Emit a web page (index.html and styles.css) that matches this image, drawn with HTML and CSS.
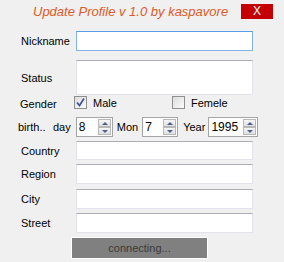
FILE: index.html
```html
<!DOCTYPE html>
<html lang="en">
<head>
    <meta charset="UTF-8">
    <meta name="viewport" content="width=device-width, initial-scale=1.0">
    <title>Update Profile</title>
    <link rel="stylesheet" href="styles.css">
</head>
<body>
    <div class="header">
        <span class="title">Update Profile v 1.0 by kaspavore</span>
        <button type="button" class="close">X</button>
    </div>

    <div class="form">
        <div class="row row-nick">
            <label class="lbl">Nickname</label>
            <div class="field focused"></div>
        </div>

        <div class="row row-status">
            <label class="lbl">Status</label>
            <div class="field tall"></div>
        </div>

        <div class="row row-gender">
            <label class="lbl">Gender</label>
            <span class="check checked">
                <svg width="11" height="11" viewBox="0 0 11 11"><path d="M2 5.5 L4.5 8.5 L9 1.5" fill="none" stroke="#3f5597" stroke-width="1.7"/></svg>
            </span>
            <span class="check-text">Male</span>
            <span class="check female"></span>
            <span class="check-text">Femele</span>
        </div>

        <div class="row row-birth">
            <span class="birth">birth..</span>
            <span class="unit">day</span>
            <div class="spin spin-day"><span class="val">8</span><span class="arrows"><i class="up"></i><i class="down"></i></span></div>
            <span class="unit">Mon</span>
            <div class="spin spin-mon"><span class="val">7</span><span class="arrows"><i class="up"></i><i class="down"></i></span></div>
            <span class="unit">Year</span>
            <div class="spin spin-year"><span class="val">1995</span><span class="arrows"><i class="up"></i><i class="down"></i></span></div>
        </div>

        <div class="row row-country">
            <label class="lbl">Country</label>
            <div class="field short"></div>
        </div>

        <div class="row row-region">
            <label class="lbl">Region</label>
            <div class="field"></div>
        </div>

        <div class="row row-city">
            <label class="lbl">City</label>
            <div class="field"></div>
        </div>

        <div class="row row-street">
            <label class="lbl">Street</label>
            <div class="field"></div>
        </div>

        <div class="actions">
            <button type="button" class="connect">connecting...</button>
        </div>
    </div>
</body>
</html>
```

FILE: styles.css
```css
body {
    margin: 0;
    background: #f0f0f0;
    font-family: "Liberation Sans", Arial, sans-serif;
    font-size: 11px;
    color: #000;
    width: 284px;
    height: 262px;
    overflow: hidden;
}

.header {
    display: flex;
    align-items: flex-start;
    height: 26px;
}

.title {
    margin: 4px 0 0 33px;
    width: 208px;
    font-size: 13px;
    font-style: italic;
    color: #dc5a28;
    line-height: 16px;
}

.close {
    margin-top: 4px;
    width: 32px;
    height: 15px;
    padding: 0;
    border: none;
    background: #c40000;
    color: #fff;
    font-family: "Liberation Sans", Arial, sans-serif;
    font-size: 12px;
    line-height: 15px;
}

.form {
    padding-left: 20px;
}

.row {
    display: flex;
    align-items: center;
}

.lbl {
    width: 56px;
    padding-left: 1px;
    box-sizing: border-box;
}

.field {
    width: 177px;
    height: 20px;
    box-sizing: border-box;
    background: #fff;
    border: 1px solid #e2e3ea;
    border-top-color: #abadb3;
}

.field.focused {
    border-color: #7eb4ea;
    border-top-color: #569de5;
}

.field.tall {
    height: 35px;
}

.field.short {
    height: 19px;
}

.row-nick { margin-top: 5px; }
.row-status { margin-top: 9px; }
.row-gender { margin-top: 1px; height: 13px; }
.row-birth { margin-top: 7px; }
.row-country { margin-top: 4px; }
.row-region { margin-top: 4px; }
.row-city { margin-top: 5px; }
.row-street { margin-top: 4px; }

.row-gender .lbl {
    width: 54px;
    padding-left: 0;
    padding-top: 2px;
}

.check {
    width: 13px;
    height: 13px;
    box-sizing: border-box;
    border: 1px solid #8e8f8f;
    background: linear-gradient(135deg, #dcdcdc, #fbfbfb);
    display: flex;
    align-items: center;
    justify-content: center;
}

.check-text {
    margin-left: 6px;
    width: 79px;
}

.birth {
    margin-left: -2px;
    width: 35px;
}

.unit {
    margin: 0 3px 0 0;
}

.spin {
    display: flex;
    align-items: center;
    height: 20px;
    box-sizing: border-box;
    border: 1px solid #a5a5a5;
    background: #fff;
    margin-right: 4px;
}

.spin-day { width: 37px; margin-left: 2px; }
.spin-mon { width: 36px; margin-left: 1px; margin-right: 5px; }
.spin-year { width: 50px; margin-left: 0; margin-top: 1px; }

.val {
    flex: 1;
    padding-left: 2px;
    font-size: 12px;
}

.arrows {
    display: flex;
    flex-direction: column;
    width: 13px;
    height: 16px;
    margin-right: 1px;
}

.arrows i {
    flex: 1;
    box-sizing: border-box;
    border: 1px solid #b8b8b8;
    background: linear-gradient(#f6f6f6, #dedede);
    position: relative;
}

.arrows i::after {
    content: "";
    position: absolute;
    left: 3px;
    top: 2px;
    border-left: 3px solid transparent;
    border-right: 3px solid transparent;
}

.arrows .up::after {
    border-bottom: 3px solid #4f6088;
}

.arrows .down::after {
    border-top: 3px solid #4f6088;
}

.actions {
    margin-top: 4px;
    padding-left: 51px;
}

.connect {
    width: 137px;
    height: 22px;
    padding: 0;
    border: 1px solid #fff;
    background: #808080;
    color: #3a3a3a;
    font-family: "Liberation Sans", Arial, sans-serif;
    font-size: 11px;
}
```
